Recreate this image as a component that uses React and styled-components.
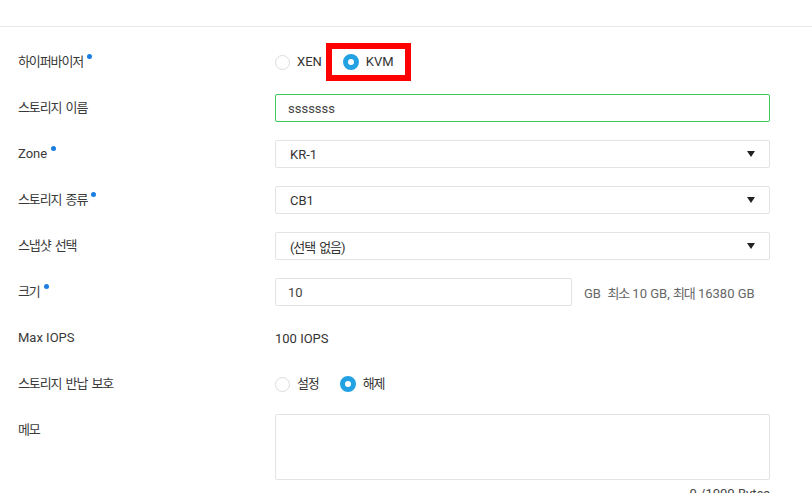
import React from "react";
import styled, { createGlobalStyle } from "styled-components";

const GlobalStyle = createGlobalStyle`
  html, body { margin: 0; padding: 0; background: #fff; }
  body {
    font-family: Roboto, "Noto Sans CJK KR", sans-serif;
    font-size: 13px;
    color: #333;
  }
`;

const Page = styled.div`
  width: 812px;
  height: 493px;
  overflow: hidden;
`;

const TopBar = styled.div`
  height: 26px;
  border-bottom: 1px solid #e8e8e8;
`;

const Form = styled.div`
  padding: 12px 42px 0 18px;
  display: flex;
  flex-direction: column;
`;

const Row = styled.div`
  display: grid;
  grid-template-columns: 257px 495px;
  min-height: 46px;
  align-items: ${(p) => (p.$top ? "start" : "center")};
`;

const Label = styled.div`
  display: inline-flex;
  align-items: flex-start;
  line-height: 16px;
  color: #3a3a3a;
  padding-top: ${(p) => (p.$top ? "15px" : "0")};
`;

const Ko = styled.span`
  letter-spacing: -1.1px;
  word-spacing: 2px;
`;

const Dot = styled.span`
  width: 5px;
  height: 5px;
  border-radius: 50%;
  background: #1a7ee0;
  margin-left: 4px;
  margin-top: 0px;
`;

const RadioGroup = styled.div`
  display: flex;
  align-items: center;
  gap: 21px;
`;

const RadioOption = styled.label`
  position: relative;
  display: inline-flex;
  align-items: center;
  gap: 7px;
  height: 16px;
  line-height: 16px;
  color: #333;
`;

const Circle = styled.span`
  box-sizing: border-box;
  width: ${(p) => (p.$checked ? "16px" : "15px")};
  height: ${(p) => (p.$checked ? "16px" : "15px")};
  border-radius: 50%;
  border: ${(p) => (p.$checked ? "5px solid #22a2e2" : "1px solid #dcdcdc")};
  background: #fff;
`;

const Highlight = styled.span`
  position: absolute;
  top: -11px;
  bottom: -11px;
  left: -17px;
  right: -17px;
  border: 6px solid #ff0000;
  pointer-events: none;
`;

const TextInput = styled.div`
  box-sizing: border-box;
  height: 28px;
  width: ${(p) => p.$width || "100%"};
  border: 1px solid ${(p) => (p.$valid ? "#3ccb5a" : "#e3e3e3")};
  border-radius: 2px;
  padding: 0 12px;
  display: flex;
  align-items: center;
  color: #444;
`;

const SelectBox = styled.div`
  box-sizing: border-box;
  height: 28px;
  border: 1px solid #e3e3e3;
  border-radius: 2px;
  padding: 0 14px 0 14px;
  display: flex;
  align-items: center;
  justify-content: space-between;
  color: #333;
`;

const Caret = styled.svg`
  width: 8px;
  height: 6px;
  fill: #222;
`;

const InlineField = styled.div`
  display: flex;
  align-items: center;
  gap: 12px;
`;

const Hint = styled.span`
  color: #666;
`;

const Value = styled.div`
  color: #333;
`;

const MemoArea = styled.div`
  display: flex;
  flex-direction: column;
  align-items: flex-end;
  padding-top: 7px;
`;

const TextArea = styled.div`
  box-sizing: border-box;
  width: 100%;
  height: 66px;
  border: 1px solid #e3e3e3;
  border-radius: 2px;
`;

const Counter = styled.div`
  margin-top: 6px;
  color: #444;
  font-size: 13px;
`;

function Select({ value }) {
  return (
    <SelectBox>
      <span>{value}</span>
      <Caret viewBox="0 0 8 6">
        <path d="M0 0 H8 L4 6 Z" />
      </Caret>
    </SelectBox>
  );
}

function Radio({ checked, children, highlight }) {
  return (
    <RadioOption>
      <Circle $checked={checked} />
      {children}
      {highlight && <Highlight />}
    </RadioOption>
  );
}

export default function App() {
  return (
    <Page>
      <GlobalStyle />
      <TopBar />
      <Form>
        <Row>
          <Label>
            <Ko>하이퍼바이저</Ko>
            <Dot />
          </Label>
          <RadioGroup>
            <Radio>XEN</Radio>
            <Radio checked highlight>
              KVM
            </Radio>
          </RadioGroup>
        </Row>
        <Row>
          <Label>
            <Ko>스토리지 이름</Ko>
          </Label>
          <TextInput $valid>sssssss</TextInput>
        </Row>
        <Row>
          <Label>
            Zone
            <Dot />
          </Label>
          <Select value="KR-1" />
        </Row>
        <Row>
          <Label>
            <Ko>스토리지 종류</Ko>
            <Dot />
          </Label>
          <Select value="CB1" />
        </Row>
        <Row>
          <Label>
            <Ko>스냅샷 선택</Ko>
          </Label>
          <Select value={<Ko>(선택 없음)</Ko>} />
        </Row>
        <Row>
          <Label>
            <Ko>크기</Ko>
            <Dot />
          </Label>
          <InlineField>
            <TextInput $width="297px">10</TextInput>
            <Hint>
              GB&nbsp; <Ko>최소</Ko> 10 GB, <Ko>최대</Ko> 16380 GB
            </Hint>
          </InlineField>
        </Row>
        <Row>
          <Label>Max IOPS</Label>
          <Value>100 IOPS</Value>
        </Row>
        <Row>
          <Label>
            <Ko>스토리지 반납 보호</Ko>
          </Label>
          <RadioGroup>
            <Radio>
              <Ko>설정</Ko>
            </Radio>
            <Radio checked>
              <Ko>해제</Ko>
            </Radio>
          </RadioGroup>
        </Row>
        <Row $top>
          <Label $top>
            <Ko>메모</Ko>
          </Label>
          <MemoArea>
            <TextArea />
            <Counter>0 /1000 Bytes</Counter>
          </MemoArea>
        </Row>
      </Form>
    </Page>
  );
}
